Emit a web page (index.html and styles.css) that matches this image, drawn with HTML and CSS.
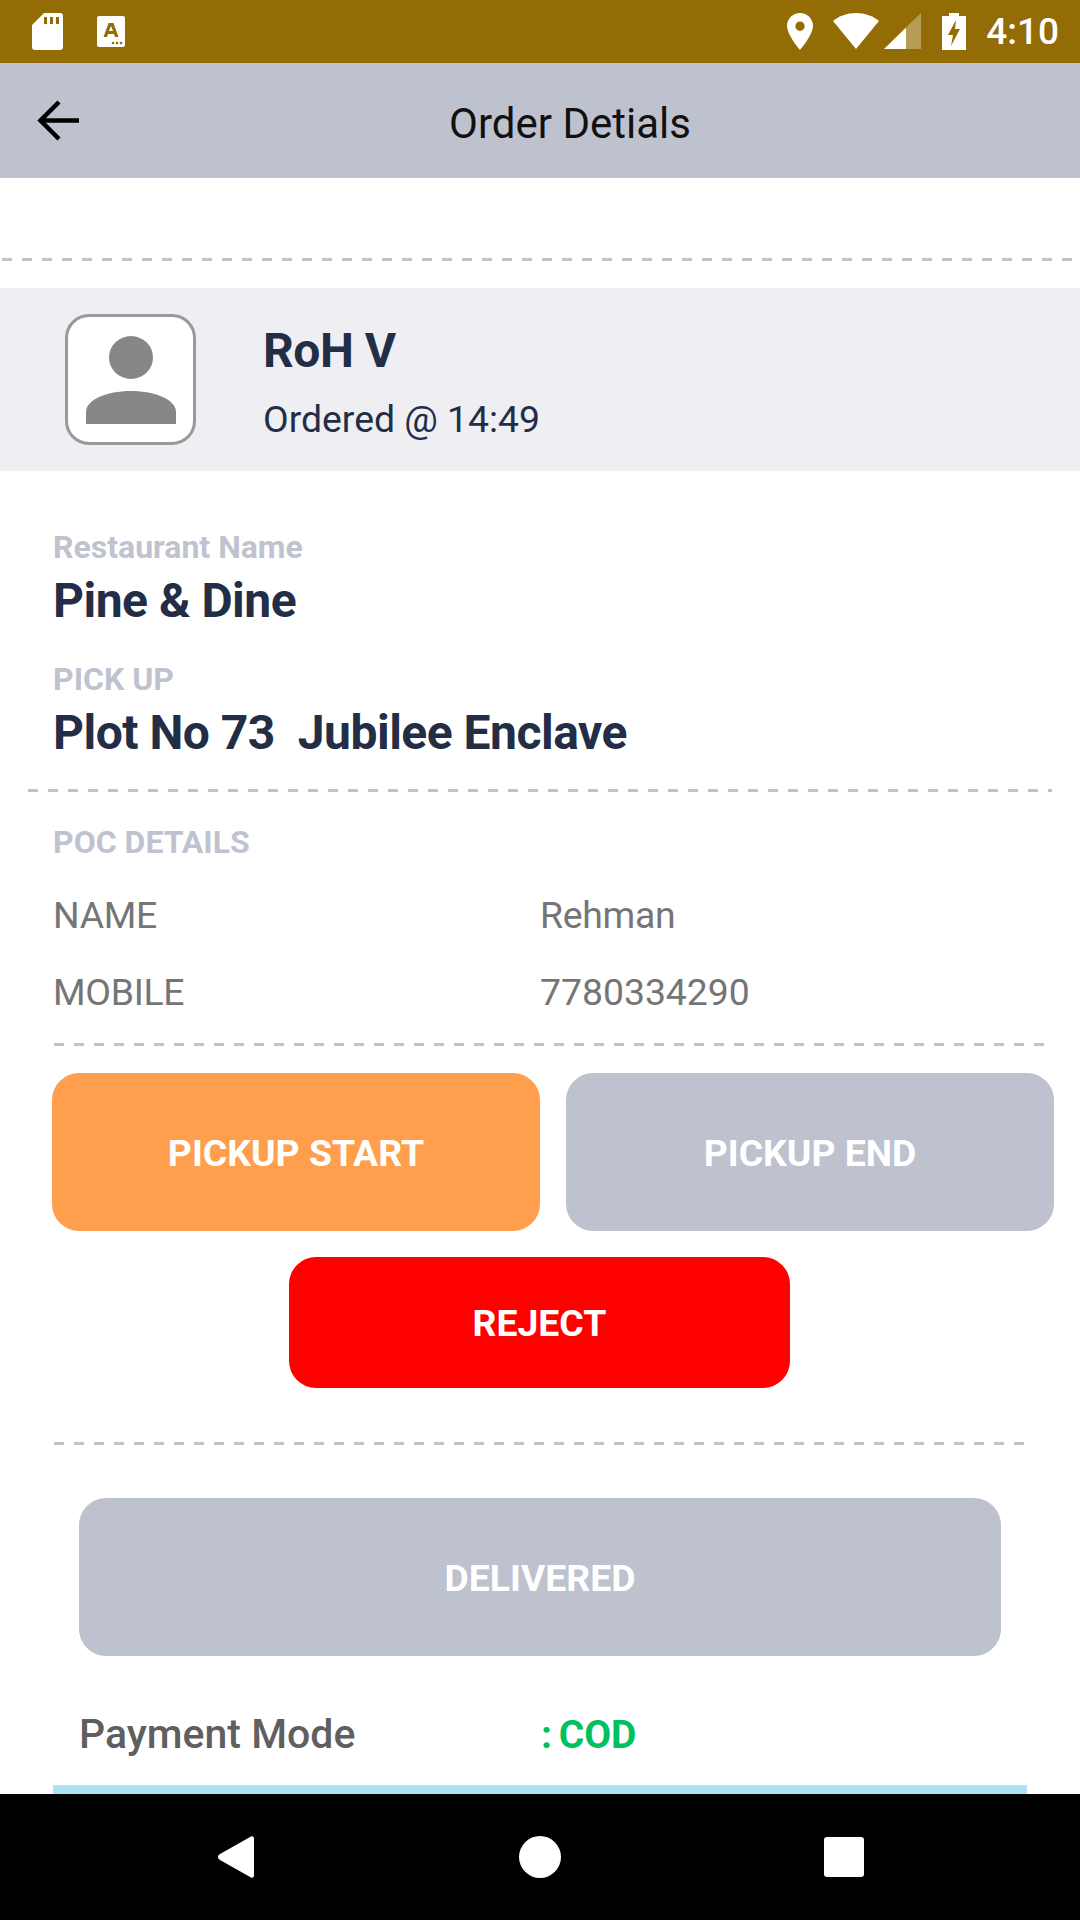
FILE: index.html
```html
<!DOCTYPE html>
<html lang="en">

<head>
    <meta charset="UTF-8">
    <meta name="viewport" content="width=device-width, initial-scale=1.0">
    <title>Order Detials</title>

    <link rel="stylesheet" href="styles.css">
</head>

<body>
    <div class="status-bar">
        <svg class="icon-sd" viewBox="0 0 31 37">
            <path fill="#fff" fill-rule="evenodd" d="M12 0H28a3 3 0 0 1 3 3V34a3 3 0 0 1-3 3H3a3 3 0 0 1-3-3V12ZM12 4V11H15V4ZM18 4V11H21V4ZM24 4V11H27V4Z" />
        </svg>
        <svg class="icon-a" viewBox="0 0 28 31">
            <path fill="#fff" fill-rule="evenodd" d="M2 0H26a2 2 0 0 1 2 2V29a2 2 0 0 1-2 2H2a2 2 0 0 1-2-2V2a2 2 0 0 1 2-2ZM11.500 7 6.500 21H10L11 18H17L18 21H21.500L16.500 7ZM12 15 14 10 16 15Z" />
            <circle cx="16" cy="27" r="1.300" fill="#946c05" />
            <circle cx="20" cy="27" r="1.300" fill="#946c05" />
            <circle cx="24" cy="27" r="1.300" fill="#946c05" />
        </svg>
        <div class="status-right">
            <svg class="icon-pin" viewBox="0 0 26 37">
                <path fill="#fff" fill-rule="evenodd" d="M13 0C5.800 0 0 5.800 0 13 0 22 13 37 13 37S26 22 26 13C26 5.800 20.200 0 13 0ZM13 8.500A4.700 4.700 0 1 1 13 17.900 4.700 4.700 0 0 1 13 8.500Z" />
            </svg>
            <svg class="icon-wifi" viewBox="0 0 46 36">
                <path fill="#fff" d="M0 8C6 3 14 0 23 0S40 3 46 8L23 36Z" />
            </svg>
            <svg class="icon-signal" viewBox="0 0 37 36">
                <path fill="#fff" d="M0 36 22 14.600V36Z" />
                <path fill="#fff" fill-opacity="0.330" d="M22 14.600 37 0V36H22Z" />
            </svg>
            <svg class="icon-battery" viewBox="0 0 24 37">
                <path fill="#fff" fill-rule="evenodd" d="M7 0H17V3H24V37H0V3H7ZM14 7 6 22H11L9 33 18 16H13Z" />
            </svg>
            <span class="status-time">4:10</span>
        </div>
    </div>

    <div class="toolbar">
        <svg class="icon-back" viewBox="0 0 42 41">
            <path fill="none" stroke="#000" stroke-width="4.500" d="M42 20.500H4M22 2 3.500 20.500 22 39" />
        </svg>
        <div class="toolbar-title">Order Detials</div>
    </div>

    <div class="content">
        <div class="dash dash-top"></div>

        <div class="customer">
            <div class="avatar">
                <svg viewBox="0 0 90 88">
                    <ellipse cx="45" cy="21.500" rx="22" ry="21.500" fill="#878787" />
                    <path fill="#878787" d="M0 88V76C0 64 20 55 45 55S90 64 90 76V88Z" />
                </svg>
            </div>
            <div class="customer-text">
                <div class="customer-name">RoH V</div>
                <div class="customer-time">Ordered @ 14:49</div>
            </div>
        </div>

        <div class="info">
            <div class="label">Restaurant Name</div>
            <div class="value">Pine &amp; Dine</div>
            <div class="label label-pickup">PICK UP</div>
            <div class="value">Plot No 73&nbsp; Jubilee Enclave</div>
        </div>

        <div class="dash dash-info"></div>

        <div class="poc">
            <div class="label">POC DETAILS</div>
            <div class="poc-row"><span>NAME</span><span>Rehman</span></div>
            <div class="poc-row"><span>MOBILE</span><span class="poc-number">7780334290</span></div>
        </div>

        <div class="dash dash-poc"></div>

        <div class="pickup-buttons">
            <button class="btn btn-orange" type="button">PICKUP START</button>
            <button class="btn btn-grey" type="button">PICKUP END</button>
        </div>
        <button class="btn btn-reject" type="button">REJECT</button>

        <div class="dash dash-reject"></div>

        <button class="btn btn-grey btn-delivered" type="button">DELIVERED</button>

        <div class="payment">
            <span class="payment-label">Payment Mode</span>
            <span class="payment-value">: COD</span>
        </div>

        <div class="blue-strip"></div>
    </div>

    <div class="nav-bar">
        <svg class="icon-nav-back" viewBox="0 0 36 42">
            <path fill="#fff" d="M33 0.500C35 -0.500 36 1 36 3V39C36 41 35 42.500 33 41.500L2 24C-0.700 22.500 -0.700 19.500 2 18Z" />
        </svg>
        <div class="nav-home"></div>
        <div class="nav-square"></div>
    </div>
</body>

</html>
```
FILE: styles.css
```css
* {
    box-sizing: border-box;
}

body {
    font-family: 'Roboto', sans-serif;
    display: flex;
    flex-direction: column;
    width: 1080px;
    height: 1920px;
    margin: 0;
    overflow: hidden;
    background-color: #ffffff;
}

.status-bar {
    display: flex;
    align-items: flex-start;
    flex: none;
    height: 63px;
    padding: 13px 21px 0 32px;
    background-color: #946c05;
}

.icon-sd {
    width: 31px;
    height: 37px;
}

.icon-a {
    width: 28px;
    height: 31px;
    margin: 3px 0 0 34px;
}

.status-right {
    display: flex;
    align-items: flex-start;
    margin-left: auto;
}

.icon-pin {
    width: 26px;
    height: 37px;
}

.icon-wifi {
    width: 46px;
    height: 36px;
    margin-left: 20px;
}

.icon-signal {
    width: 37px;
    height: 36px;
    margin-left: 5px;
}

.icon-battery {
    width: 24px;
    height: 37px;
    margin-left: 21px;
}

.status-time {
    margin-left: 20px;
    font-size: 37px;
    line-height: 37px;
    font-weight: 500;
    color: #ffffff;
}

.toolbar {
    position: relative;
    display: flex;
    align-items: center;
    justify-content: center;
    flex: none;
    height: 115px;
    background-color: #bec2cf;
}

.icon-back {
    position: absolute;
    left: 37px;
    top: 37px;
    width: 42px;
    height: 41px;
}

.toolbar-title {
    margin: 5px 0 0 60px;
    font-size: 42px;
    color: #111111;
}

.content {
    flex: 1;
    min-height: 0;
    overflow: hidden;
}

/* пунктирные линии, у каждой своя длина */
.dash {
    height: 3px;
    background-image: repeating-linear-gradient(to right, #bfc3cf 0, #bfc3cf 10px, transparent 10px, transparent 20px);
}

.dash-top {
    margin: 80px 0 0 2px;
}

.dash-info {
    width: 1024px;
    margin: 0 0 0 28px;
}

.dash-poc {
    width: 991px;
    margin: 0 0 0 54px;
}

.dash-reject {
    width: 971px;
    margin: 54px 0 0 54px;
}

.customer {
    display: flex;
    align-items: center;
    height: 183px;
    margin-top: 27px;
    padding-left: 65px;
    background-color: #eeeef3;
}

.avatar {
    display: flex;
    align-items: center;
    justify-content: center;
    flex: none;
    width: 131px;
    height: 131px;
    margin-right: 67px;
    background-color: #ffffff;
    border: 3px solid #999999;
    border-radius: 24px;
}

.avatar svg {
    width: 90px;
    height: 88px;
}

.customer-text {
    margin-top: 5px;
}

.customer-name {
    font-size: 48px;
    line-height: 54px;
    font-weight: 700;
    letter-spacing: -0.45px;
    color: #232e46;
}

.customer-time {
    margin-top: 20px;
    font-size: 37.330px;
    line-height: 42px;
    color: #232e46;
}

.info {
    padding: 58px 0 0 53px;
    height: 318px;
}

.label {
    font-size: 32px;
    line-height: 36px;
    font-weight: 700;
    color: #bfc3cf;
}

.label-pickup {
    margin-top: 33px;
}

.value {
    margin-top: 9px;
    font-size: 48px;
    line-height: 54px;
    font-weight: 700;
    letter-spacing: -0.5px;
    color: #232e46;
}

.poc {
    height: 251px;
    padding: 32px 0 0 53px;
}

.poc-row {
    display: grid;
    grid-template-columns: 487px 1fr;
    margin-top: 33px;
    font-size: 37.330px;
    line-height: 44px;
    letter-spacing: -0.3px;
    color: #757575;
}

.poc-number {
    letter-spacing: 0;
}

.btn {
    display: block;
    border: none;
    padding: 0;
    font-family: inherit;
    font-weight: 700;
    font-size: 37.330px;
    color: #ffffff;
    border-radius: 27px;
}

.btn-orange {
    background-color: #ff9f4d;
}

.btn-grey {
    background-color: #bec2cf;
}

.pickup-buttons {
    display: flex;
    gap: 26px;
    margin: 27px 0 0 52px;
}

.pickup-buttons .btn {
    width: 488px;
    height: 158px;
    padding-top: 2px;
}

.btn-reject {
    width: 501px;
    height: 131px;
    margin: 26px 0 0 289px;
    background-color: #ff0000;
}

.btn-delivered {
    width: 922px;
    height: 158px;
    margin: 53px 0 0 79px;
    padding-top: 2px;
}

.payment {
    display: flex;
    margin: 54px 0 0 79px;
    height: 48px;
    line-height: 48px;
    font-size: 41px;
    font-weight: 500;
}

.payment-label {
    width: 462px;
    color: #5f5f5f;
}

.payment-value {
    padding-top: 1px;
    font-size: 39px;
    font-weight: 700;
    word-spacing: -3px;
    color: #00c060;
}

.blue-strip {
    width: 974px;
    height: 9px;
    margin: 27px 0 0 53px;
    background-color: #aee1f6;
}

.nav-bar {
    position: relative;
    flex: none;
    height: 126px;
    background-color: #000000;
}

.icon-nav-back {
    position: absolute;
    left: 218px;
    top: 42px;
    width: 36px;
    height: 42px;
}

.nav-home {
    position: absolute;
    left: 519px;
    top: 42px;
    width: 42px;
    height: 42px;
    background-color: #ffffff;
    border-radius: 50%;
}

.nav-square {
    position: absolute;
    left: 824px;
    top: 43px;
    width: 40px;
    height: 40px;
    background-color: #ffffff;
    border-radius: 3px;
}
```
